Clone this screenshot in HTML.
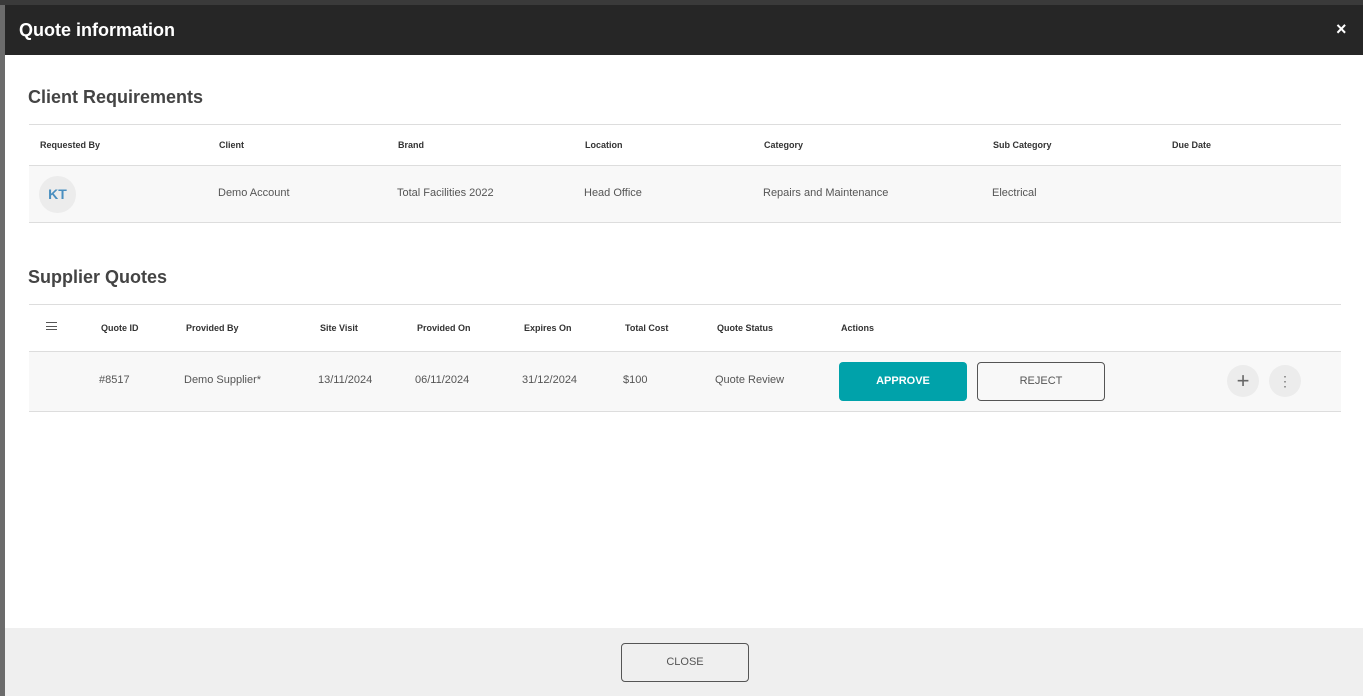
<!DOCTYPE html>
<html><head><meta charset="utf-8"><style>
*{margin:0;padding:0;box-sizing:border-box}
body{width:1363px;height:696px;overflow:hidden;background:#6b6b6b;font-family:"Liberation Sans",sans-serif;position:relative}
.a{position:absolute;white-space:nowrap}
.modal{position:absolute;left:5px;top:5px;width:1358px;height:691px;background:#fff}
.hdr{position:absolute;left:0;top:0;width:1358px;height:50px;background:#262626}
.th{font-size:9px;font-weight:bold;color:#333}
.td{font-size:11px;color:#555}
.h2{font-size:18px;font-weight:bold;color:#444}
</style></head><body>
<div class="a" style="left:0;top:0;width:1363px;height:5px;background:#3a3a3a"></div>
<div class="modal">
<div class="hdr"></div>
<div class="a" style="left:14px;top:15px;font-size:18px;font-weight:bold;color:#fff">Quote information</div>
<div class="a" style="left:1331px;top:14px;font-size:18px;font-weight:bold;color:#fff">×</div>

<div class="a h2" style="left:23px;top:82px">Client Requirements</div>
<div class="a" style="left:24px;top:119px;width:1312px;height:1px;background:#ddd"></div>
<div class="a" style="left:24px;top:160px;width:1312px;height:58px;background:#f8f8f8;border-top:1px solid #ddd;border-bottom:1px solid #ddd"></div>
<div class="a th" style="left:35px;top:135px">Requested By</div>
<div class="a th" style="left:214px;top:135px">Client</div>
<div class="a th" style="left:393px;top:135px">Brand</div>
<div class="a th" style="left:580px;top:135px">Location</div>
<div class="a th" style="left:759px;top:135px">Category</div>
<div class="a th" style="left:988px;top:135px">Sub Category</div>
<div class="a th" style="left:1167px;top:135px">Due Date</div>
<div class="a" style="left:34px;top:171px;width:37px;height:37px;border-radius:50%;background:#ececec;color:#4a8fc0;font-weight:bold;font-size:14px;text-align:center;line-height:37px">KT</div>
<div class="a td" style="left:213px;top:182px">Demo Account</div>
<div class="a td" style="left:392px;top:182px">Total Facilities 2022</div>
<div class="a td" style="left:579px;top:182px">Head Office</div>
<div class="a td" style="left:758px;top:182px">Repairs and Maintenance</div>
<div class="a td" style="left:987px;top:182px">Electrical</div>

<div class="a h2" style="left:23px;top:262px">Supplier Quotes</div>
<div class="a" style="left:24px;top:299px;width:1312px;height:1px;background:#ddd"></div>
<div class="a" style="left:24px;top:346px;width:1312px;height:61px;background:#f8f8f8;border-top:1px solid #ddd;border-bottom:1px solid #ddd"></div>
<div class="a" style="left:41px;top:317px;width:11px;height:8px;border-top:1px solid #555;border-bottom:1px solid #555"><div style="margin-top:3px;height:1px;background:#555"></div></div>
<div class="a th" style="left:96px;top:318px">Quote ID</div>
<div class="a th" style="left:181px;top:318px">Provided By</div>
<div class="a th" style="left:315px;top:318px">Site Visit</div>
<div class="a th" style="left:412px;top:318px">Provided On</div>
<div class="a th" style="left:519px;top:318px">Expires On</div>
<div class="a th" style="left:620px;top:318px">Total Cost</div>
<div class="a th" style="left:712px;top:318px">Quote Status</div>
<div class="a th" style="left:836px;top:318px">Actions</div>
<div class="a td" style="left:94px;top:369px">#8517</div>
<div class="a td" style="left:179px;top:369px">Demo Supplier*</div>
<div class="a td" style="left:313px;top:369px">13/11/2024</div>
<div class="a td" style="left:410px;top:369px">06/11/2024</div>
<div class="a td" style="left:517px;top:369px">31/12/2024</div>
<div class="a td" style="left:618px;top:369px">$100</div>
<div class="a td" style="left:710px;top:369px">Quote Review</div>
<div class="a" style="left:834px;top:357px;width:128px;height:39px;background:#00a2aa;border-radius:4px;color:#fff;font-size:11px;font-weight:bold;text-align:center;line-height:39px">APPROVE</div>
<div class="a" style="left:972px;top:357px;width:128px;height:39px;border:1px solid #555;border-radius:4px;color:#555;font-size:11px;text-align:center;line-height:37px">REJECT</div>
<div class="a" style="left:1222px;top:360px;width:32px;height:32px;border-radius:50%;background:#ececec;color:#666;font-size:22px;text-align:center;line-height:31px">+</div>
<div class="a" style="left:1264px;top:360px;width:32px;height:32px;border-radius:50%;background:#ececec;color:#777;font-size:14px;text-align:center;line-height:32px">⋮</div>

<div class="a" style="left:0;top:623px;width:1358px;height:68px;background:#efefef"></div>
<div class="a" style="left:616px;top:638px;width:128px;height:39px;border:1px solid #555;border-radius:4px;color:#555;font-size:11px;text-align:center;line-height:37px">CLOSE</div>
</div>
</body></html>
